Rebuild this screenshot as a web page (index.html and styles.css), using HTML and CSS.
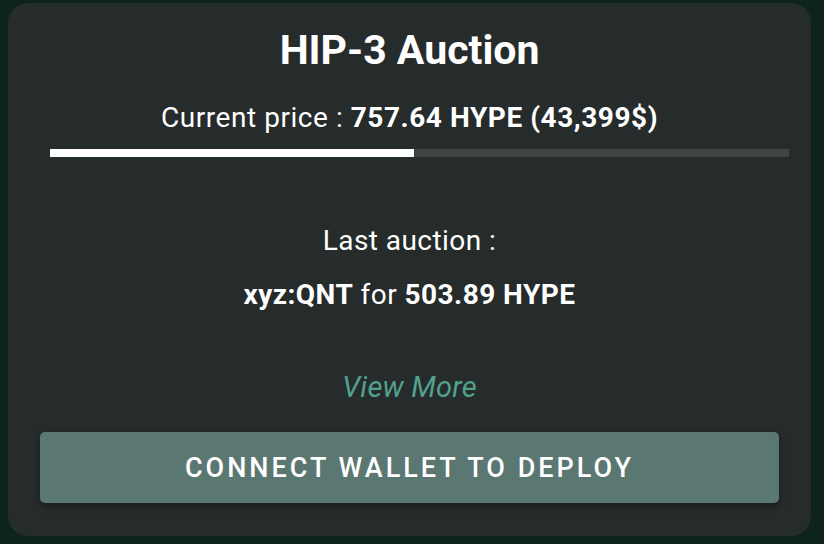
FILE: index.html
```html
<!DOCTYPE html>
<html lang="en">

<head>
    <meta charset="UTF-8">
    <meta name="viewport" content="width=device-width, initial-scale=1">
    <title>HIP-3 Auction</title>
    <link rel="stylesheet" href="styles.css">
</head>

<body>
    <div class="auction-card">
        <h1 class="title">HIP-3 Auction</h1>

        <p class="price">Current price : <b>757.64 HYPE (43,399$)</b></p>
        <div class="progress">
            <div class="progress-fill" style="width: 49.3%"></div>
        </div>

        <div class="last-auction">
            <p>Last auction :</p>
            <p><b>xyz:QNT</b> for <b>503.89 HYPE</b></p>
        </div>

        <a href="#" class="view-more">View More</a>

        <button class="deploy-btn">Connect wallet to deploy</button>
    </div>
</body>

</html>
```

FILE: styles.css
```css
/* Reset */
* {
    margin: 0;
    padding: 0;
    box-sizing: border-box;
}

body {
    font-family: Roboto, 'Liberation Sans', sans-serif;
    background-color: #0c231e;
    color: #fff;
    padding: 3px 13px 8px 8px;
    height: 544px;
    overflow: hidden;
}

.auction-card {
    background-color: #262b2b;
    border-radius: 20px;
    height: 533px;
    padding: 0 32px;
    display: flex;
    flex-direction: column;
    align-items: center;
    text-align: center;
}

.title {
    font-size: 41px;
    font-weight: 700;
    line-height: 48px;
    margin-top: 23px;
}

.price {
    font-size: 28px;
    line-height: 34px;
    margin-top: 27px;
    letter-spacing: 0.55px;
}

.price b {
    font-weight: 700;
}

/* barra de progresso, deslocada 10px como no original */
.progress {
    width: 100%;
    height: 8px;
    margin: 14px -10px 0 10px;
    background-color: #414645;
}

.progress-fill {
    height: 100%;
    background-color: #fff;
}

.last-auction {
    margin-top: 67px;
    font-size: 28px;
    line-height: 34px;
    letter-spacing: 0.45px;
}

.last-auction p + p {
    margin-top: 20px;
}

.view-more {
    margin-top: 57px;
    font-size: 29px;
    font-style: italic;
    color: #53a08c;
    text-decoration: none;
    line-height: 36px;
    letter-spacing: 0.2px;
}

.deploy-btn {
    margin-top: 27px;
    width: 100%;
    height: 71px;
    border: none;
    border-radius: 5px;
    background-color: #5b7771;
    color: #fff;
    font-family: Roboto, 'Liberation Sans', sans-serif;
    font-size: 27px;
    font-weight: 500;
    letter-spacing: 3px;
    text-transform: uppercase;
    box-shadow: 0 3px 6px rgba(0, 0, 0, 0.35);
    cursor: pointer;
}
```
